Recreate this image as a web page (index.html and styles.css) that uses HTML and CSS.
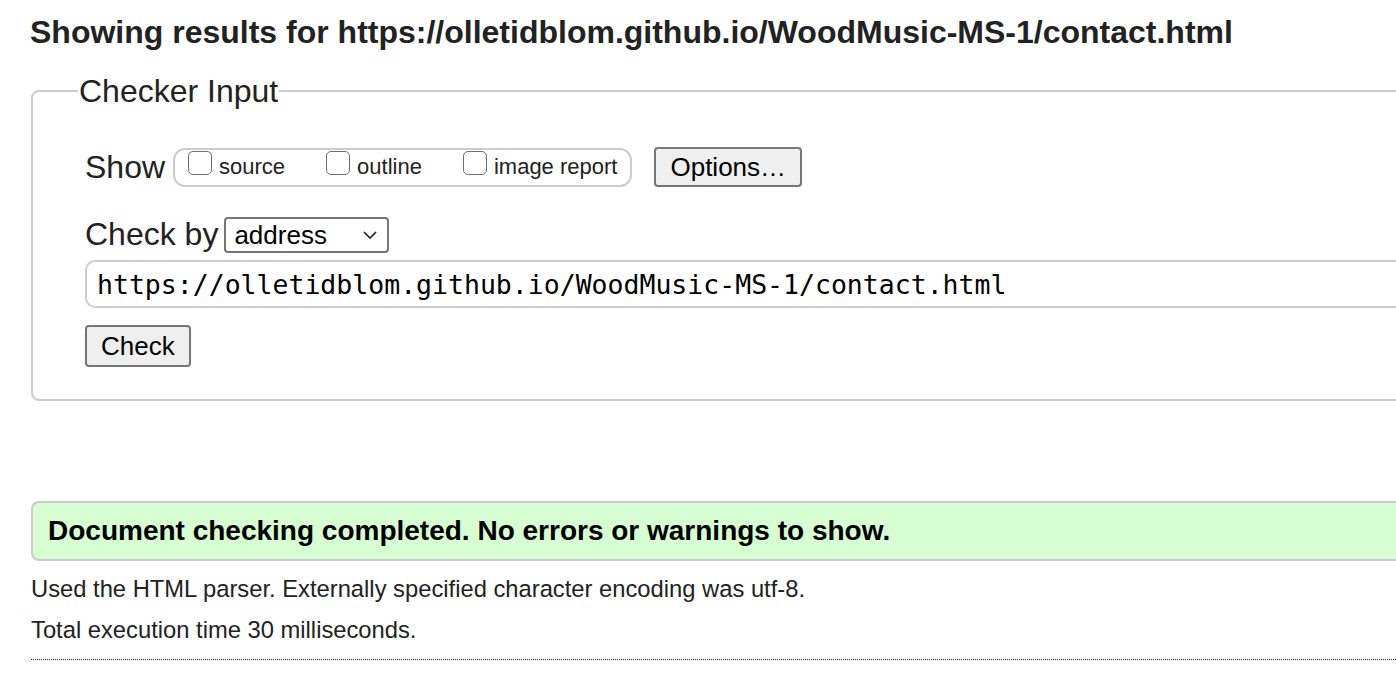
FILE: index.html
```html
<!DOCTYPE html>
<html lang="en">
<head>
    <meta charset="UTF-8">
    <meta name="viewport" content="width=device-width, initial-scale=1.0">
    <title>Showing results for contact.html - Nu Html Checker</title>
    <link rel="stylesheet" href="styles.css">
</head>
<body>
    <div class="page">
        <h2 class="results-title">Showing results for https://olletidblom.github.io/WoodMusic-MS-1/contact.html</h2>

        <form class="checker-form" method="get">
            <fieldset class="checker-input">
                <legend>Checker Input</legend>

                <div class="row show-row">
                    <span class="row-label">Show</span>
                    <div class="show-options">
                        <label class="option"><input type="checkbox" name="showsource"> source</label>
                        <label class="option"><input type="checkbox" name="showoutline"> outline</label>
                        <label class="option"><input type="checkbox" name="showimagereport"> image report</label>
                    </div>
                    <button type="button" class="btn">Options…</button>
                </div>

                <div class="row checkby-row">
                    <label class="row-label" for="docselect">Check by</label>
                    <select id="docselect" class="docselect">
                        <option value="doc">address</option>
                        <option value="file">file upload</option>
                        <option value="textarea">text input</option>
                    </select>
                </div>

                <input type="url" class="doc-url" name="doc" value="https://olletidblom.github.io/WoodMusic-MS-1/contact.html">

                <button type="submit" class="btn check-btn">Check</button>
            </fieldset>
        </form>

        <div class="success">
            <p>Document checking completed. No errors or warnings to show.</p>
        </div>

        <p class="details">Used the HTML parser. Externally specified character encoding was utf-8.</p>
        <p class="details">Total execution time 30 milliseconds.</p>

        <hr class="dotted">
    </div>
</body>
</html>
```

FILE: styles.css
```css
html, body {
    margin: 0;
    overflow: hidden;
}

body {
    font-family: "Liberation Sans", Arial, sans-serif;
    color: #222;
    background: #fff;
}

.page {
    width: 1420px;
    padding-left: 30px;
}

.results-title {
    font-size: 32px;
    font-weight: bold;
    line-height: 36px;
    margin: 14px 0 0;
    white-space: nowrap;
}

.checker-form {
    margin: 23px 0 0 1px;
}

.checker-input {
    margin: 0;
    padding: 0 0 32px 52px;
    border: 2px solid #ccc;
    border-radius: 8px;
}

.checker-input legend {
    font-size: 32px;
    line-height: 36px;
    padding: 0 1px;
    margin-left: -7px;
}

.row {
    display: flex;
    align-items: center;
}

.row-label {
    font-size: 32px;
}

.show-row {
    margin-top: 38px;
}

.show-row .row-label {
    margin-right: 8px;
}

.show-options {
    display: flex;
    align-items: center;
    gap: 41px;
    height: 35px;
    padding: 0 13px 0 13px;
    border: 2px solid #ccc;
    border-radius: 12px;
}

.option {
    display: flex;
    align-items: center;
    font-size: 22px;
}

.option input {
    width: 24px;
    height: 24px;
    margin: 0 7px 8px 0;
    appearance: none;
    border: 1.5px solid #6e6e6e;
    border-radius: 5px;
    background: #fff;
}

.btn {
    font-family: "Liberation Sans", Arial, sans-serif;
    font-size: 26px;
    color: #000;
    background: #efefef;
    border: 2px solid #767676;
    border-radius: 4px;
    padding: 0 14px;
    height: 40px;
}

.show-row .btn {
    margin-left: 22px;
}

.checkby-row {
    margin-top: 29px;
}

.checkby-row .row-label {
    margin-right: 6px;
}

.docselect {
    font-family: "Liberation Sans", Arial, sans-serif;
    font-size: 26px;
    color: #000;
    width: 165px;
    height: 36px;
    padding: 0 8px;
    border: 2px solid #767676;
    border-radius: 4px;
    appearance: none;
    background: #fff url("data:image/svg+xml,%3Csvg xmlns='http://www.w3.org/2000/svg' width='16' height='10' viewBox='0 0 16 10'%3E%3Cpath d='M2 2l6 6 6-6' fill='none' stroke='%23222' stroke-width='1.6'/%3E%3C/svg%3E") no-repeat right 9px center;
}

.doc-url {
    display: block;
    box-sizing: border-box;
    width: 100%;
    height: 48px;
    margin-top: 7px;
    padding: 0 10px;
    font-family: "DejaVu Sans Mono", monospace;
    font-size: 26.5px;
    color: #000;
    border: 2px solid #ccc;
    border-radius: 10px 0 0 10px;
    border-right: none;
}

.check-btn {
    display: block;
    margin-top: 17px;
    height: 42px;
}

.success {
    margin: 100px 0 0 1px;
    border: 2px solid #ccc;
    border-right: none;
    border-radius: 8px 0 0 8px;
    background: #d7fdd3;
    height: 56px;
    display: flex;
    align-items: center;
    padding-left: 15px;
}

.success p {
    margin: 0;
    font-size: 28px;
    font-weight: bold;
    color: #000;
}

.details {
    font-size: 23.75px;
    margin: 15px 0 0 1px;
    line-height: 26px;
}

.dotted {
    margin: 16px 0 0 1px;
    border: none;
    border-top: 1px dotted #333;
}
```
